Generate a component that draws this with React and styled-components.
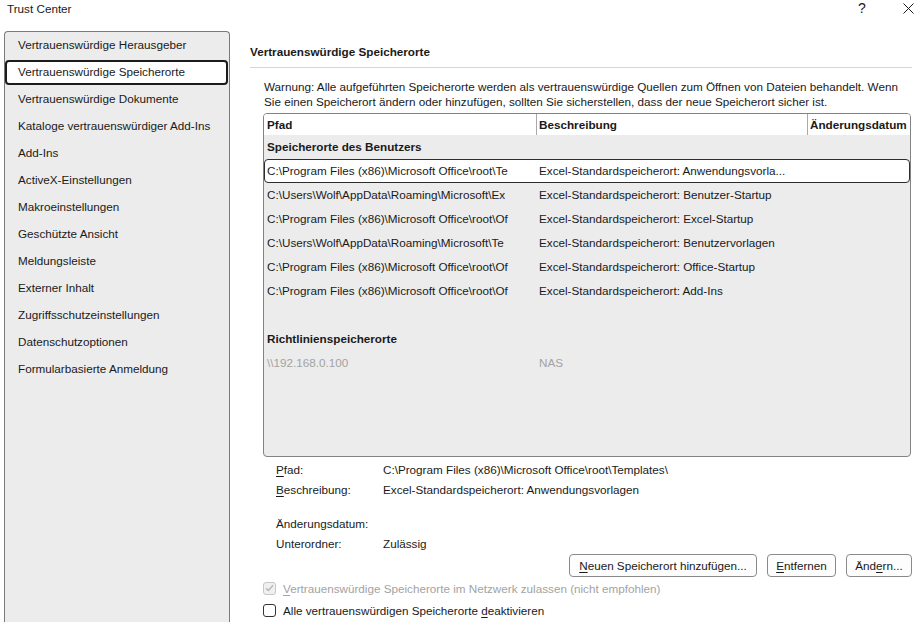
import React from "react";
import styled, { createGlobalStyle } from "styled-components";

const Global = createGlobalStyle`
  html, body { margin: 0; padding: 0; background: #ffffff; }
  body {
    font-family: "Liberation Sans", Arial, sans-serif;
    font-size: 11.7px;
    color: #1a1a1a;
  }
  * { box-sizing: border-box; }
`;

const Window = styled.div`
  width: 924px;
  height: 622px;
  overflow: hidden;
  display: flex;
  flex-direction: column;
  background: #ffffff;
`;

const TitleBar = styled.div`
  height: 31px;
  flex: none;
  display: flex;
  align-items: flex-start;
  padding: 1px 1px 0 7px;
  line-height: 15px;
`;

const Title = styled.div`
  flex: 1;
`;

const TitleButton = styled.div`
  width: 30px;
  height: 15px;
  display: flex;
  align-items: center;
  justify-content: center;
  font-size: 14px;
  margin-left: ${(p) => p.$gap || 0}px;
`;

const Body = styled.div`
  flex: 1;
  min-height: 0;
  display: flex;
`;

const Sidebar = styled.nav`
  width: 226px;
  flex: none;
  margin-left: 4px;
  border: 1px solid #7a7a7a;
  border-bottom: none;
  border-radius: 4px 4px 0 0;
  background: #ececec;
  display: flex;
  flex-direction: column;
`;

const NavItem = styled.div`
  height: ${(p) => (p.$active ? 25 : 27)}px;
  margin: ${(p) => (p.$active ? "1px 1px 1px 0" : "0")};
  padding-left: ${(p) => (p.$active ? 11 : 13)}px;
  padding-bottom: 2px;
  border: ${(p) => (p.$active ? "2px solid #1c1c1c" : "none")};
  border-radius: 4px;
  background: ${(p) => (p.$active ? "#ffffff" : "transparent")};
  display: flex;
  align-items: center;
  white-space: nowrap;
`;

const Main = styled.main`
  flex: 1;
  min-width: 0;
  padding: 13px 12px 0 20px;
  display: flex;
  flex-direction: column;
`;

const Heading = styled.div`
  font-weight: bold;
  line-height: 16px;
  padding-bottom: 7px;
  border-bottom: 1px solid #d6d6d6;
`;

const Warning = styled.div`
  margin: 11px 0 4px 14px;
  line-height: 15px;
  white-space: nowrap;
`;

const ListBox = styled.div`
  margin-left: 13px;
  width: 648px;
  height: 344px;
  flex: none;
  border: 1px solid #838383;
  border-radius: 4px;
  background: #ececec;
  overflow: hidden;
`;

const Columns = styled.div`
  display: grid;
  grid-template-columns: 273px 271px 1fr;
`;

const HeaderRow = styled(Columns)`
  height: 21px;
  background: #ffffff;
  font-weight: bold;
`;

const HeaderCell = styled.div`
  padding-left: ${(p) => (p.$first ? 3 : 2)}px;
  padding-bottom: 1px;
  display: flex;
  align-items: center;
  white-space: nowrap;
  overflow: hidden;
  border-right: ${(p) => (p.$last ? "none" : "1px solid #a9a9a9")};
`;

const Row = styled(Columns)`
  height: 24px;
  padding-bottom: 1px;
  border: 1px solid ${(p) => (p.$selected ? "#2d2d2d" : "transparent")};
  border-radius: 4px;
  background: ${(p) => (p.$selected ? "#ffffff" : "transparent")};
  color: ${(p) => (p.$muted ? "#a3a3a3" : "inherit")};
`;

const Cell = styled.div`
  padding-left: ${(p) => (p.$first ? 2 : 1)}px;
  display: flex;
  align-items: center;
  white-space: nowrap;
  overflow: hidden;
`;

const GroupRow = styled.div`
  height: 24px;
  padding: 0 0 1px 3px;
  display: flex;
  align-items: center;
  font-weight: bold;
`;

const BlankRow = styled.div`
  height: 24px;
`;

const Details = styled.div`
  margin: 2px 0 0 26px;
  display: grid;
  grid-template-columns: 107px 1fr;
  grid-template-rows: 20px 20px 14px 20px 20px;
  align-items: center;
  white-space: nowrap;
`;

const DetailGap = styled.div`
  grid-column: 1 / -1;
`;

const Key = styled.span`
  text-decoration: underline;
  text-underline-offset: 2px;
`;

const ButtonRow = styled.div`
  margin-top: 1px;
  display: flex;
  justify-content: flex-end;
  gap: 10px;
`;

const Button = styled.button`
  width: ${(p) => p.$w}px;
  height: 23px;
  padding: 0;
  border: 1px solid #8a8a8a;
  border-radius: 4px;
  background: #fdfdfd;
  font: inherit;
  color: #1a1a1a;
  white-space: nowrap;
`;

const CheckRow = styled.label`
  margin-left: 13px;
  height: 22px;
  display: flex;
  align-items: center;
  gap: 7px;
  white-space: nowrap;
  color: ${(p) => (p.$disabled ? "#a3a3a3" : "inherit")};
`;

const Box = styled.span`
  width: 13px;
  height: 13px;
  flex: none;
  border: 1px solid ${(p) => (p.$disabled ? "#c6c6c6" : "#333333")};
  border-radius: 3px;
  background: ${(p) => (p.$disabled ? "#f0f0f0" : "#ffffff")};
  display: flex;
  align-items: center;
  justify-content: center;
`;

const navItems = [
  "Vertrauenswürdige Herausgeber",
  "Vertrauenswürdige Speicherorte",
  "Vertrauenswürdige Dokumente",
  "Kataloge vertrauenswürdiger Add-Ins",
  "Add-Ins",
  "ActiveX-Einstellungen",
  "Makroeinstellungen",
  "Geschützte Ansicht",
  "Meldungsleiste",
  "Externer Inhalt",
  "Zugriffsschutzeinstellungen",
  "Datenschutzoptionen",
  "Formularbasierte Anmeldung",
];

const userRows = [
  ["C:\\Program Files (x86)\\Microsoft Office\\root\\Te", "Excel-Standardspeicherort: Anwendungsvorla..."],
  ["C:\\Users\\Wolf\\AppData\\Roaming\\Microsoft\\Ex", "Excel-Standardspeicherort: Benutzer-Startup"],
  ["C:\\Program Files (x86)\\Microsoft Office\\root\\Of", "Excel-Standardspeicherort: Excel-Startup"],
  ["C:\\Users\\Wolf\\AppData\\Roaming\\Microsoft\\Te", "Excel-Standardspeicherort: Benutzervorlagen"],
  ["C:\\Program Files (x86)\\Microsoft Office\\root\\Of", "Excel-Standardspeicherort: Office-Startup"],
  ["C:\\Program Files (x86)\\Microsoft Office\\root\\Of", "Excel-Standardspeicherort: Add-Ins"],
];

function CloseIcon() {
  return (
    <svg width="11" height="11" viewBox="0 0 11 11">
      <path d="M0.5 0.5 L10.5 10.5 M10.5 0.5 L0.5 10.5" stroke="#1a1a1a" strokeWidth="1" />
    </svg>
  );
}

function Check() {
  return (
    <svg width="9" height="8" viewBox="0 0 9 8">
      <path d="M1 4.2 L3.4 6.5 L8 1.3" fill="none" stroke="#b4b4b4" strokeWidth="1.3" />
    </svg>
  );
}

export default function App() {
  return (
    <>
      <Global />
      <Window>
        <TitleBar>
          <Title>Trust Center</Title>
          <TitleButton>?</TitleButton>
          <TitleButton $gap={16}>
            <CloseIcon />
          </TitleButton>
        </TitleBar>
        <Body>
          <Sidebar>
            {navItems.map((item, i) => (
              <NavItem key={item} $active={i === 1}>
                {item}
              </NavItem>
            ))}
          </Sidebar>
          <Main>
            <Heading>Vertrauenswürdige Speicherorte</Heading>
            <Warning>
              Warnung: Alle aufgeführten Speicherorte werden als vertrauenswürdige Quellen zum Öffnen von Dateien behandelt. Wenn
              <br />
              Sie einen Speicherort ändern oder hinzufügen, sollten Sie sicherstellen, dass der neue Speicherort sicher ist.
            </Warning>
            <ListBox>
              <HeaderRow>
                <HeaderCell $first>Pfad</HeaderCell>
                <HeaderCell>Beschreibung</HeaderCell>
                <HeaderCell $last>Änderungsdatum</HeaderCell>
              </HeaderRow>
              <GroupRow>Speicherorte des Benutzers</GroupRow>
              {userRows.map(([path, desc], i) => (
                <Row key={i} $selected={i === 0}>
                  <Cell $first>{path}</Cell>
                  <Cell>{desc}</Cell>
                  <Cell />
                </Row>
              ))}
              <BlankRow />
              <GroupRow>Richtlinienspeicherorte</GroupRow>
              <Row $muted>
                <Cell $first>\\192.168.0.100</Cell>
                <Cell>NAS</Cell>
                <Cell />
              </Row>
            </ListBox>
            <Details>
              <div>
                <Key>P</Key>fad:
              </div>
              <div>C:\Program Files (x86)\Microsoft Office\root\Templates\</div>
              <div>
                <Key>B</Key>eschreibung:
              </div>
              <div>Excel-Standardspeicherort: Anwendungsvorlagen</div>
              <DetailGap />
              <div>Änderungsdatum:</div>
              <div />
              <div>Unterordner:</div>
              <div>Zulässig</div>
            </Details>
            <ButtonRow>
              <Button $w={188}>
                <Key>N</Key>euen Speicherort hinzufügen...
              </Button>
              <Button $w={69}>
                <Key>E</Key>ntfernen
              </Button>
              <Button $w={66}>
                Änd<Key>e</Key>rn...
              </Button>
            </ButtonRow>
            <CheckRow $disabled>
              <Box $disabled>
                <Check />
              </Box>
              <span>
                <Key>V</Key>ertrauenswürdige Speicherorte im Netzwerk zulassen (nicht empfohlen)
              </span>
            </CheckRow>
            <CheckRow>
              <Box />
              <span>
                Alle vertrauenswürdigen Speicherorte <Key>d</Key>eaktivieren
              </span>
            </CheckRow>
          </Main>
        </Body>
      </Window>
    </>
  );
}
